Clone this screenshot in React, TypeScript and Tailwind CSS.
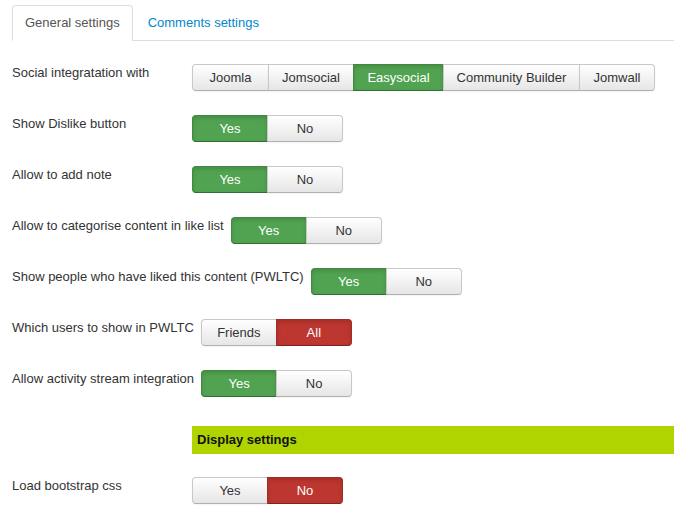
import React from 'react';

type Tone = 'green' | 'red' | 'none';

type Opt = { label: string; w: number; tone: Tone };

const font = { fontFamily: '"Liberation Sans", Arial, Helvetica, sans-serif' };

function BtnGroup({ options }: { options: Opt[] }) {
  return (
    <div className="flex h-[27px] shrink-0">
      {options.map((o, i) => {
        const first = i === 0;
        const last = i === options.length - 1;
        const base =
          'flex items-center justify-center h-[27px] text-[13px] leading-[18px] border shadow-[inset_0_1px_0_rgba(255,255,255,0.2),0_1px_2px_rgba(0,0,0,0.05)]';
        const tone =
          o.tone === 'green'
            ? 'bg-[#51a351] border-[#3f8a3f] border-b-[#2f6f2f] text-white shadow-[inset_0_2px_4px_rgba(0,0,0,0.15)]'
            : o.tone === 'red'
            ? 'bg-[#bd362f] border-[#a12d27] border-b-[#80231f] text-white shadow-[inset_0_2px_4px_rgba(0,0,0,0.15)]'
            : 'bg-gradient-to-b from-white to-[#e6e6e6] border-[#c8c8c8] border-b-[#b0b0b0] text-[#333]';
        return (
          <div
            key={o.label}
            style={{ width: o.w }}
            className={`${base} ${tone} ${first ? 'rounded-l-[4px]' : '-ml-px'} ${last ? 'rounded-r-[4px]' : ''}`}
          >
            {o.label}
          </div>
        );
      })}
    </div>
  );
}

const yesNo = (yes: boolean): Opt[] => [
  { label: 'Yes', w: 76, tone: yes ? 'green' : 'none' },
  { label: 'No', w: 76, tone: yes ? 'none' : 'red' },
];

function Row({ label, options }: { label: string; options: Opt[] }) {
  return (
    <div className="flex items-start mb-[24px]">
      <div className="min-w-[180px] pr-[7px] text-[13px] leading-[18px] text-[#333] whitespace-nowrap">{label}</div>
      <BtnGroup options={options} />
    </div>
  );
}

export default function App() {
  return (
    <div className="bg-white w-[674px] h-[529px] overflow-hidden pt-[5px] pl-[12px]" style={font}>
      <div className="flex border-b border-[#ddd] text-[13px] leading-[18px]">
        <div className="-mb-px mr-[2px] px-[12px] py-[8px] border border-[#ddd] border-b-white bg-white rounded-t-[4px] text-[#555]">
          General settings
        </div>
        <div className="-mb-px mr-[2px] px-[12px] py-[8px] border border-transparent text-[#0088cc]">
          Comments settings
        </div>
      </div>

      <div className="pt-[23px]">
        <Row
          label="Social integratation with"
          options={[
            { label: 'Joomla', w: 77, tone: 'none' },
            { label: 'Jomsocial', w: 86, tone: 'none' },
            { label: 'Easysocial', w: 91, tone: 'green' },
            { label: 'Community Builder', w: 137, tone: 'none' },
            { label: 'Jomwall', w: 76, tone: 'none' },
          ]}
        />
        <Row label="Show Dislike button" options={yesNo(true)} />
        <Row label="Allow to add note" options={yesNo(true)} />
        <Row label="Allow to categorise content in like list" options={yesNo(true)} />
        <Row label="Show people who have liked this content (PWLTC)" options={yesNo(true)} />
        <Row
          label="Which users to show in PWLTC"
          options={[
            { label: 'Friends', w: 76, tone: 'none' },
            { label: 'All', w: 76, tone: 'red' },
          ]}
        />
        <Row label="Allow activity stream integration" options={yesNo(true)} />

        <div className="flex mt-[29px] mb-[23px]">
          <div className="min-w-[180px]" />
          <div className="flex-1 h-[28px] bg-[#b0d400] flex items-center pl-[5px] text-[13px] font-bold text-[#111]">
            Display settings
          </div>
        </div>

        <Row label="Load bootstrap css" options={yesNo(false)} />
      </div>
    </div>
  );
}
